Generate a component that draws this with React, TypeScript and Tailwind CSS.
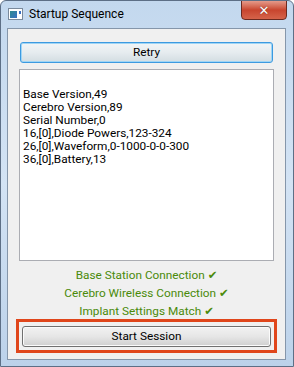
import React from "react";

const font = { fontFamily: 'Roboto, "Noto Sans", sans-serif' };

export default function App() {
  const lines = [
    "Base Version,49",
    "Cerebro Version,89",
    "Serial Number,0",
    "16,[0],Diode Powers,123-324",
    "26,[0],Waveform,0-1000-0-0-300",
    "36,[0],Battery,13",
  ];
  const status = [
    "Base Station Connection",
    "Cerebro Wireless Connection",
    "Implant Settings Match",
  ];
  return (
    <div
      className="w-[294px] h-[367px] rounded-t-[6px] border border-[#5d6f86] bg-gradient-to-b from-[#c3d8ee] via-[#d3e3f4] to-[#bcd2ea] flex flex-col text-[11px] text-black overflow-hidden"
      style={font}
    >
      <div className="h-[27px] shrink-0 flex items-start relative">
        <div className="ml-[7px] mt-[7px] w-[15px] h-[12px] border border-[#7a8a9c] bg-white flex items-center p-[1px]">
          <div className="w-[7px] h-[7px] bg-gradient-to-br from-[#2f8a8f] to-[#3c6fc4]" />
          <div className="ml-auto w-[2px] h-[3px] bg-[#3a6fc2] self-start mt-[1px]" />
        </div>
        <div className="ml-[6px] mt-[6px] text-[12px] leading-[15px] text-black">Startup Sequence</div>
        <div className="absolute right-[6px] top-[-1px] w-[46px] h-[20px] rounded-b-[4px] border border-[#6b2a20] bg-gradient-to-b from-[#e49a8a] via-[#c8452e] to-[#d5634a] flex items-center justify-center">
          <span className="text-white font-bold text-[13px] leading-none" style={{ fontFamily: '"DejaVu Sans", sans-serif', textShadow: "0 0 1px #5a1a10" }}>✕</span>
        </div>
      </div>
      <div className="ml-[6px] mr-[7px] mb-[6px] flex-1 min-h-0 border border-[#8596aa] bg-[#f0f0f0] flex flex-col px-[11px] pt-[13px]">
        <button className="h-[21px] shrink-0 mx-[1px] rounded-[3px] border border-[#3c9ae0] bg-gradient-to-b from-[#f1f5f7] via-[#e6ecef] to-[#d3dde2] shadow-[inset_0_0_0_1px_#9fd5f5] text-[11.8px] leading-none text-black">
          Retry
        </button>
        <div className="mt-[6px] h-[192px] shrink-0 border border-[#abadb3] bg-white pl-[3px] pt-[18px] text-[11.8px] leading-[13px]">
          {lines.map((l) => (
            <div key={l}>{l}</div>
          ))}
        </div>
        <div className="mt-[5px] shrink-0 flex flex-col items-center text-[#4a8a0a] text-[11.8px] leading-[18px]">
          {status.map((s) => (
            <div key={s}>
              {s} <span style={{ fontFamily: '"DejaVu Sans", sans-serif' }} className="text-[11.5px]">✔</span>
            </div>
          ))}
        </div>
        <div className="mt-[-1px] shrink-0 -mx-[3px] border-[3px] border-[#e0461b] px-[3px] pt-[4px] pb-[3px]">
          <button className="block w-full h-[21px] rounded-[3px] border border-[#707070] bg-gradient-to-b from-[#f2f2f2] via-[#e6e6e6] to-[#cfcfcf] shadow-[inset_0_0_0_1px_#fbfbfb] text-[11.8px] leading-none text-black">
            Start Session
          </button>
        </div>
      </div>
    </div>
  );
}
